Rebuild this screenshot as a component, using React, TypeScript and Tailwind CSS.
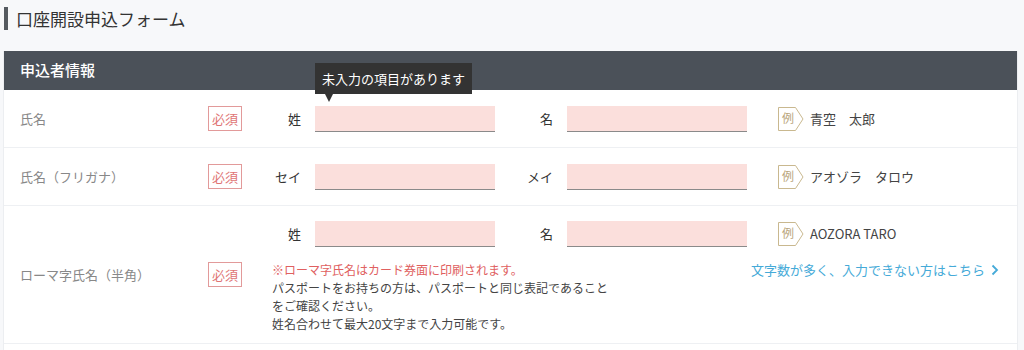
import React from 'react';

const jp = '"Noto Sans CJK JP", "Noto Sans", sans-serif';

function Badge() {
  return (
    <div className="w-[34px] h-[25px] border border-[#e29a9a] text-[#e07575] text-[13px] flex items-center justify-center shrink-0">
      必須
    </div>
  );
}

function Example({ text }: { text: string }) {
  return (
    <div className="flex items-center gap-[6px] ml-[31px]">
      <div className="relative w-[26px] h-[24px] shrink-0">
        <svg width="26" height="24" viewBox="0 0 26 24" className="absolute inset-0">
          <path d="M0.5 0.5 H17.5 L25 12 L17.5 23.5 H0.5 Z" fill="none" stroke="#c9b88f" strokeWidth="1" />
        </svg>
        <span className="absolute left-[4px] top-[2px] text-[12px] text-[#b9a57c]">例</span>
      </div>
      <span className="text-[13px] text-[#444] whitespace-pre">{text}</span>
    </div>
  );
}

function NameFields({ a, b, ex }: { a: string; b: string; ex: string }) {
  return (
    <div className="flex items-center">
      <div className="w-[58px] pr-[14px] text-right text-[13px] text-[#333]">{a}</div>
      <div className="w-[180px] h-[26px] bg-[#fbdfdc] border-b border-[#8a8a8a]" />
      <div className="w-[72px] pr-[14px] text-right text-[13px] text-[#333]">{b}</div>
      <div className="w-[180px] h-[26px] bg-[#fbdfdc] border-b border-[#8a8a8a]" />
      <Example text={ex} />
    </div>
  );
}

export default function App() {
  return (
    <div className="w-[1024px] h-[350px] bg-[#f7f8fa] overflow-hidden" style={{ fontFamily: jp }}>
      <div className="flex items-center h-[37px] pl-[4px]">
        <div className="w-[4px] h-[23px] bg-[#555a60]" />
        <h1 className="ml-[8px] text-[17px] text-[#333] leading-none">口座開設申込フォーム</h1>
      </div>

      <div className="mt-[14px] ml-[3px] w-[1015px] bg-white border-x border-[#eceef1]">
        <div className="h-[39px] bg-[#4b5159] flex items-center pl-[16px] text-white text-[15px] font-medium">
          申込者情報
        </div>

        {/* 氏名 */}
        <div className="relative flex items-center h-[58px] border-b border-[#eef0f3]">
          <div className="w-[204px] pl-[16px] text-[13px] text-[#888]">氏名</div>
          <Badge />
          <div className="ml-[15px]">
            <NameFields a="姓" b="名" ex="青空　太郎" />
          </div>
          <div className="absolute left-[311px] top-[-27px] z-10">
            <div className="bg-[#333] text-white text-[13px] h-[31px] px-[7px] flex items-center whitespace-nowrap">
              未入力の項目があります
            </div>
            <div className="ml-[10px] w-0 h-0 border-x-[4px] border-x-transparent border-t-[8px] border-t-[#333]" />
          </div>
        </div>

        {/* 氏名（フリガナ） */}
        <div className="flex items-center h-[58px] border-b border-[#eef0f3]">
          <div className="w-[204px] pl-[16px] text-[13px] text-[#888]">氏名（フリガナ）</div>
          <Badge />
          <div className="ml-[15px]">
            <NameFields a="セイ" b="メイ" ex="アオゾラ　タロウ" />
          </div>
        </div>

        {/* ローマ字氏名 */}
        <div className="flex items-center h-[138px] border-b border-[#eef0f3]">
          <div className="w-[204px] pl-[16px] text-[13px] text-[#888]">ローマ字氏名（半角）</div>
          <Badge />
          <div className="ml-[15px] self-stretch pt-[15px]">
            <NameFields a="姓" b="名" ex="AOZORA TARO" />
            <div className="flex mt-[14px]">
              <div className="ml-[15px] w-[479px] text-[12px] leading-[18px] text-[#444] whitespace-nowrap">
                <div className="text-[#e06060]">※ローマ字氏名はカード券面に印刷されます。</div>
                <div>パスポートをお持ちの方は、パスポートと同じ表記であること</div>
                <div>をご確認ください。</div>
                <div>姓名合わせて最大20文字まで入力可能です。</div>
              </div>
              <div className="flex items-center gap-[6px] h-[18px] text-[13px] text-[#45aad8] whitespace-nowrap">
                文字数が多く、入力できない方はこちら
                <svg width="8" height="12" viewBox="0 0 8 12">
                  <path d="M1.5 1.5 L6 6 L1.5 10.5" fill="none" stroke="#45aad8" strokeWidth="1.8" />
                </svg>
              </div>
            </div>
          </div>
        </div>
        <div className="h-[20px]" />
      </div>
    </div>
  );
}
